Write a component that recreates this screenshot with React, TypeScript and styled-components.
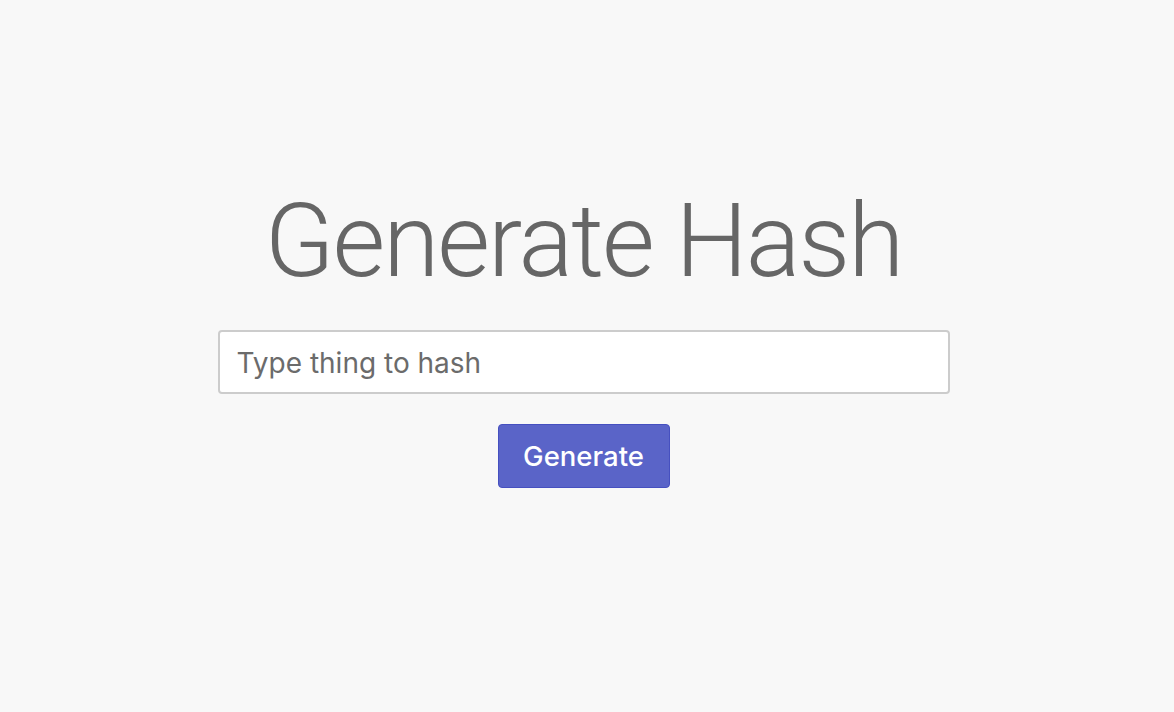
import React from "react";
import styled, { createGlobalStyle } from "styled-components";

const Global = createGlobalStyle`
  html, body { margin: 0; padding: 0; background: #f8f8f8; }
  body { font-family: Inter, "Helvetica Neue", Arial, sans-serif; }
`;

const Page = styled.main`
  box-sizing: border-box;
  width: 100%;
  height: 712px;
  padding: 186px 7px 0 0;
  display: flex;
  flex-direction: column;
  align-items: center;
`;

const Title = styled.h1`
  margin: 0;
  font-family: Roboto, "Helvetica Neue", sans-serif;
  font-weight: 300;
  font-size: 102px;
  line-height: 110px;
  letter-spacing: -2px;
  color: #666666;
`;

const Form = styled.form`
  margin-top: 34px;
  display: flex;
  flex-direction: column;
  align-items: center;
  gap: 30px;
`;

const Input = styled.input`
  box-sizing: border-box;
  width: 732px;
  height: 64px;
  padding: 2px 17px 0;
  border: 2px solid #cccccc;
  border-radius: 4px;
  background: #ffffff;
  font-family: Inter, "Helvetica Neue", sans-serif;
  font-size: 28px;
  color: #333;
  outline: none;
  &::placeholder { color: #6b6b6b; opacity: 1; }
`;

const Button = styled.button`
  box-sizing: border-box;
  width: 172px;
  height: 64px;
  border: 1.5px solid #4650c0;
  border-radius: 4px;
  background: #5a64c8;
  color: #ffffff;
  font-family: Inter, "Helvetica Neue", sans-serif;
  font-weight: 500;
  font-size: 27.5px;
  cursor: pointer;
`;

export default function App() {
  return (
    <>
      <Global />
      <Page>
        <Title>Generate Hash</Title>
        <Form onSubmit={(e) => e.preventDefault()}>
          <Input placeholder="Type thing to hash" />
          <Button type="submit">Generate</Button>
        </Form>
      </Page>
    </>
  );
}
